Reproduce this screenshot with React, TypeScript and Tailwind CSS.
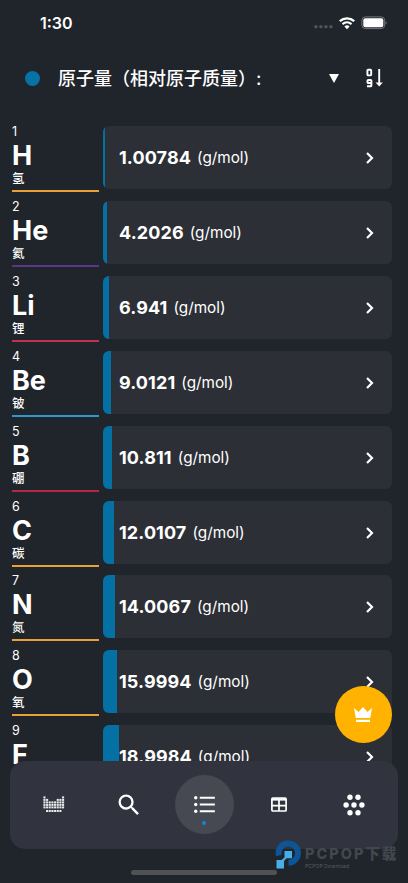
import React from "react";

type Element = { n: number; symbol: string; name: string; mass: string; line: string; bar: string };

const elements: Element[] = [
  { n: 1, symbol: "H", name: "氢", mass: "1.00784", line: "bg-[#e9a135]", bar: "w-[2px]" },
  { n: 2, symbol: "He", name: "氦", mass: "4.2026", line: "bg-[#5d3586]", bar: "w-[4px]" },
  { n: 3, symbol: "Li", name: "锂", mass: "6.941", line: "bg-[#c5304f]", bar: "w-[6px]" },
  { n: 4, symbol: "Be", name: "铍", mass: "9.0121", line: "bg-[#3096cf]", bar: "w-[8px]" },
  { n: 5, symbol: "B", name: "硼", mass: "10.811", line: "bg-[#b32945]", bar: "w-[9px]" },
  { n: 6, symbol: "C", name: "碳", mass: "12.0107", line: "bg-[#e9a135]", bar: "w-[10.5px]" },
  { n: 7, symbol: "N", name: "氮", mass: "14.0067", line: "bg-[#e9a135]", bar: "w-[12px]" },
  { n: 8, symbol: "O", name: "氧", mass: "15.9994", line: "bg-[#e9a135]", bar: "w-[13.5px]" },
  { n: 9, symbol: "F", name: "氟", mass: "18.9984", line: "bg-[#e9a135]", bar: "w-[16px]" },
];

function StatusBar() {
  return (
    <div className="flex h-[46px] shrink-0 items-center pr-[21px] pl-[40px]">
      <span className="flex-1 text-[16px] leading-5 font-semibold">1:30</span>
      <svg width="74" height="14" viewBox="0 0 74 14" fill="none">
        {[2, 7, 12, 17].map((x) => (
          <rect key={x} x={x - 0.7} y="9.2" width="3.2" height="3" rx="1" fill="#50545b" />
        ))}
        <path d="M26.8 5.1a10.6 10.6 0 0 1 14.4 0" stroke="#fff" strokeWidth="2.3" />
        <path d="M29.5 8.1a6.8 6.8 0 0 1 9 0" stroke="#fff" strokeWidth="2.1" />
        <path d="M34 13.2l-2.6-2.7a3.9 3.9 0 0 1 5.2 0z" fill="#fff" />
        <rect x="48.9" y="0.9" width="22.8" height="11.7" rx="3.5" stroke="#75787d" />
        <rect x="50.3" y="2.3" width="20" height="8.9" rx="2" fill="#fff" />
        <path d="M72.6 4.9c1.4.5 1.4 3.2 0 3.7z" fill="#75787d" />
      </svg>
    </div>
  );
}

function Header() {
  return (
    <div className="flex h-[64px] shrink-0 items-center pr-[24px] pl-[25px]">
      <span className="size-[15px] rounded-full bg-[#0672a5]" />
      <h1 className="ml-[18px] flex-1 pt-[2px] text-[18px] leading-6 font-medium">原子量（相对原子质量）:</h1>
      <svg width="10" height="9" viewBox="0 0 10 9" className="mr-[27px]">
        <path d="M0 0h10L5 9z" fill="#fff" />
      </svg>
      <svg width="18" height="20" viewBox="0 0 18 20" fill="none" stroke="#fff" strokeWidth="1.9">
        <rect x="1.4" y="1.8" width="3.8" height="5.6" rx="0.8" />
        <path d="M5.4 15H2.3a.8.8 0 0 1-.8-.8v-1.4a.8.8 0 0 1 .8-.8h2.3a.8.8 0 0 1 .8.8v4.6a.8.8 0 0 1-.8.8H1" />
        <path d="M13.2 1v15" />
        <path d="M9.6 14.6h7.2l-3.6 4z" fill="#fff" stroke="none" />
      </svg>
    </div>
  );
}

function ElementRow({ item }: { item: Element }) {
  return (
    <div className={`flex shrink-0 pr-4 pl-3 ${item.n === 6 ? "h-[74px]" : "h-[75px]"}`}>
      <div className="mr-[4px] flex w-[87px] flex-col pt-[8px]">
        <span className="h-[13px] text-[12.5px] leading-[13px]">{item.n}</span>
        <span className="mt-[4px] h-[28px] text-[27px] leading-[28px] font-bold">{item.symbol}</span>
        <span className="mt-px h-[16px] text-[12.5px] leading-[16px] font-medium">{item.name}</span>
        <span className={`mt-[3px] h-[2px] shrink-0 ${item.line}`} />
      </div>
      <div className="mt-[9px] flex h-[63px] flex-1 overflow-hidden rounded-[6px] bg-[#2c2f36]">
        <div className="w-[16px] shrink-0">
          <div className={`h-full bg-[#0470a3] ${item.bar}`} />
        </div>
        <div className="flex flex-1 items-center pr-[18px]">
          <span className="text-[18px] font-bold tracking-[0.1px]">{item.mass}</span>
          <span className="ml-[6px] flex-1 pt-px text-[15.3px]">(g/mol)</span>
          <svg width="8" height="12" viewBox="0 0 8 12" fill="none" stroke="#fff" strokeWidth="2.2">
            <path d="M1 1l5 5-5 5" />
          </svg>
        </div>
      </div>
    </div>
  );
}

const spectrum = ["10000001", "11000111", "11111111", "11111111", "11111111"];

function SpectrumIcon() {
  return (
    <svg width="22" height="17" viewBox="0 0 22 17" fill="#e9eaec">
      {spectrum.flatMap((row, y) =>
        row.split("").map((cell, x) =>
          cell === "1" ? <rect key={`${x}-${y}`} x={0.4 + x * 2.66} y={0.4 + y * 2.5} width="2.1" height="2" /> : null,
        ),
      )}
      {[0, 1, 2, 3, 4, 5].map((x) => (
        <rect key={x} x={3.06 + x * 2.66} y="14" width="2.1" height="2" />
      ))}
    </svg>
  );
}

function NavBar() {
  const slot = "flex w-[75.2px] items-center justify-center";
  return (
    <nav className="absolute top-[760.5px] left-[10px] flex h-[88.5px] w-[388px] justify-center rounded-[15px] bg-[#31343e]">
      <div className={slot}><SpectrumIcon /></div>
      <div className={slot}>
        <svg width="28" height="28" viewBox="0 0 24 24" fill="#fff">
          <path d="M15.5 14h-.79l-.28-.27A6.47 6.47 0 0 0 16 9.5 6.5 6.5 0 1 0 9.5 16c1.61 0 3.09-.59 4.23-1.57l.27.28v.79l5 4.99L20.49 19zm-6 0C7.01 14 5 11.99 5 9.5S7.01 5 9.5 5 14 7.01 14 9.5 11.99 14 9.5 14z" />
        </svg>
      </div>
      <div className={slot}>
        <div className="relative flex size-[59px] shrink-0 items-center justify-center rounded-full bg-[#464952]">
          <svg width="27" height="27" viewBox="0 0 24 24" fill="#fff">
            <circle cx="4.2" cy="6" r="1.5" />
            <circle cx="4.2" cy="12" r="1.5" />
            <circle cx="4.2" cy="18" r="1.5" />
            <path d="M7.8 5.1h13.4v1.8H7.8zM7.8 11.1h13.4v1.8H7.8zM7.8 17.1h13.4v1.8H7.8z" />
          </svg>
          <span className="absolute bottom-[9px] size-[4px] rounded-full bg-[#1686d8]" />
        </div>
      </div>
      <div className={slot}>
        <svg width="16" height="15" viewBox="0 0 16 15" fill="none" stroke="#fff" strokeWidth="1.7">
          <rect x="0.9" y="1" width="14.2" height="13" rx="1" />
          <path d="M1 2.4h14" strokeWidth="2.4" />
          <path d="M8 3v11M1 8.6h14" />
        </svg>
      </div>
      <div className={slot}>
        <svg width="22" height="22" viewBox="0 0 22 22" fill="#fff">
          <circle cx="7" cy="3.3" r="2.7" /><circle cx="15" cy="3.3" r="2.7" />
          <circle cx="3.1" cy="11" r="2.7" /><circle cx="11" cy="11" r="2.7" /><circle cx="18.9" cy="11" r="2.7" />
          <circle cx="7" cy="18.7" r="2.7" /><circle cx="15" cy="18.7" r="2.7" />
        </svg>
      </div>
    </nav>
  );
}

function Watermark() {
  return (
    <div className="absolute top-[839px] left-[275px] flex h-[31px]">
      <svg width="28" height="31" viewBox="0 0 28 31" fill="none">
        <path d="M3.9 16.5a9.7 9.7 0 1 1 9.6 7.3" stroke="#0d5596" strokeWidth="6" />
        <path d="M9.5 12h7.5v7.3h-5.5l-2.5 2.7v7.5H1.5V21h5l3-2.5z" fill="#48aee6" />
      </svg>
      <div className="ml-[2px] flex flex-col pt-[6px]">
        <span className="h-[17px] text-[14.5px] leading-[17px] font-extrabold tracking-[2px] whitespace-nowrap text-[#44474d]">PCPOP下载</span>
        <span className="mt-px h-[6px] text-[5px] leading-[6px] tracking-[0.15px] text-[#5b5e65]">PCPOP Download</span>
      </div>
    </div>
  );
}

export default function App() {
  return (
    <div className="relative flex h-[883px] w-[408px] flex-col overflow-hidden bg-[#20242b] font-['Inter','Noto_Sans_CJK_SC',sans-serif] text-white">
      <StatusBar />
      <Header />
      <main className="flex min-h-0 flex-1 flex-col overflow-hidden pt-[7px]">
        {elements.map((item) => (
          <ElementRow key={item.n} item={item} />
        ))}
      </main>
      <button className="absolute top-[685.5px] left-[334.5px] flex size-[57px] items-center justify-center rounded-full bg-[#ffb300]">
        <svg width="18" height="16" viewBox="0 0 18 16" fill="#fff" className="mt-[2px]">
          <path d="M0 1l4.6 4L9 0l4.4 5L18 1l-1.8 10H1.8z" />
          <path d="M2 12.8h14V15H2z" />
        </svg>
      </button>
      <div className="absolute top-[849px] left-0 h-[34px] w-full bg-[#20242b]" />
      <NavBar />
      <div className="absolute top-[870px] left-[131px] h-[5px] w-[146px] rounded-full bg-[#505153]" />
      <Watermark />
    </div>
  );
}
